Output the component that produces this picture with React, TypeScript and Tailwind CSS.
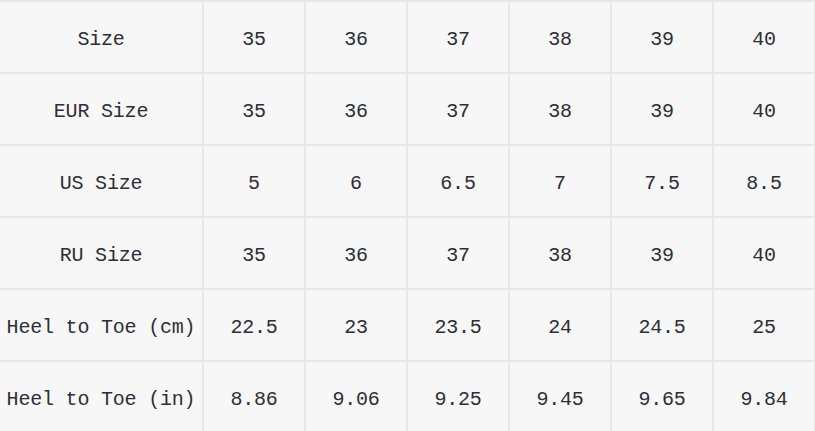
const rows: string[][] = [
  ['Size', '35', '36', '37', '38', '39', '40'],
  ['EUR Size', '35', '36', '37', '38', '39', '40'],
  ['US Size', '5', '6', '6.5', '7', '7.5', '8.5'],
  ['RU Size', '35', '36', '37', '38', '39', '40'],
  ['Heel to Toe (cm)', '22.5', '23', '23.5', '24', '24.5', '25'],
  ['Heel to Toe (in)', '8.86', '9.06', '9.25', '9.45', '9.65', '9.84'],
];

export default function App() {
  return (
    <div className="w-[815px] h-[431px] overflow-hidden bg-[#e8e8e8] pt-[2px] pr-[2px]">
      <div
        className="grid grid-cols-[202px_repeat(6,100px)] auto-rows-[70px] gap-[2px] text-[#2e2e38] text-[20px] tracking-[-0.2px]"
        style={{ fontFamily: '"Liberation Mono", "Noto Sans CJK SC", monospace' }}
      >
        {rows.map((row, i) =>
          row.map((cell, j) => (
            <div
              key={`${i}-${j}`}
              className="bg-[#f7f7f7] flex items-center justify-center whitespace-nowrap pt-[6px]"
            >
              {cell}
            </div>
          ))
        )}
      </div>
    </div>
  );
}
